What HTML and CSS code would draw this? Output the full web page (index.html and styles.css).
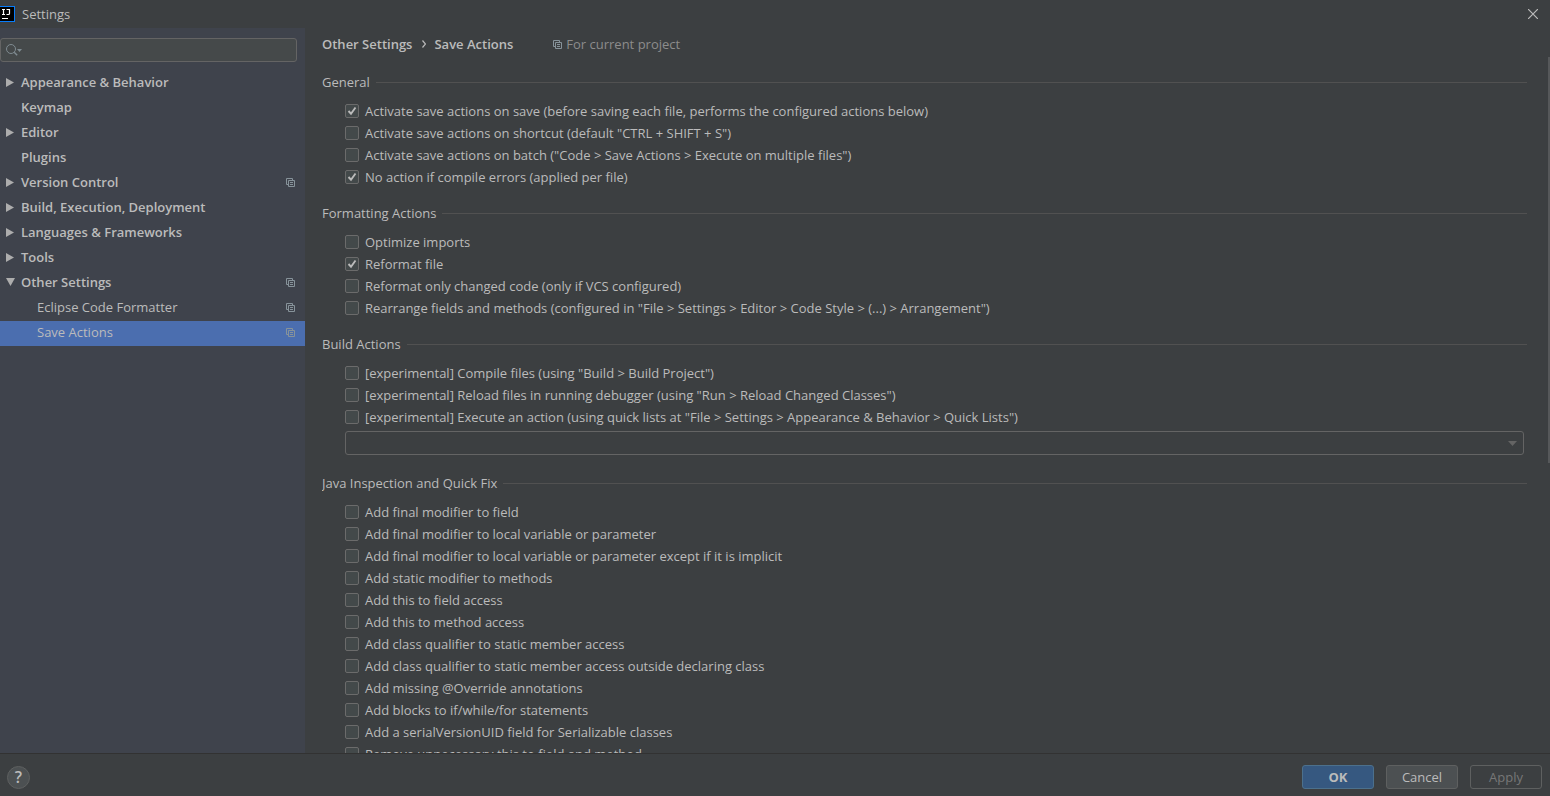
FILE: index.html
```html
<!DOCTYPE html>
<html lang="en">
<head>
<meta charset="utf-8">
<title>Settings</title>
<link rel="stylesheet" href="styles.css">
</head>
<body>
<svg class="defs" aria-hidden="true">
  <symbol id="copy" viewBox="0 0 9 9"><path d="M2.500 6.500h-2v-6h6v2M2.500 2.500h6v6h-6zM4 4.500h3M4 6.500h3" fill="none" stroke="currentColor"/></symbol>
  <symbol id="right" viewBox="0 0 9 9"><path d="M0 0l8 4.500L0 9z" fill="currentColor"/></symbol>
  <symbol id="down" viewBox="0 0 9 9"><path d="M0 0h9L4.500 8z" fill="currentColor"/></symbol>
</svg>
<div class="window">
  <header class="titlebar">
    <svg class="logo" viewBox="0 0 15 16"><path d="M-1 0h16v16H-1z" fill="#087cfa"/><path d="M0 1h14v14H0z" fill="#000"/><path d="M2 3.500h3M3.500 3.500v5M2 8.500h3M6.500 3.500h3v4q0 1-1 1h-2M2 12.500h6" fill="none" stroke="#fff" stroke-width="1.200"/></svg>
    <h1 class="title">Settings</h1>
    <button class="close" aria-label="Close"><svg viewBox="0 0 10 10"><path d="M0 0l10 10M10 0L0 10" fill="none" stroke="currentColor" stroke-width="1.200"/></svg></button>
  </header>
  <div class="body">
    <aside class="sidebar">
      <label class="search">
        <svg viewBox="0 0 16 12"><circle cx="5" cy="5" r="4.500" fill="none" stroke="currentColor"/><path d="M8.200 8.200l3 3" stroke="currentColor" stroke-width="1.400"/><path d="M11 5h5l-2.500 3z" fill="currentColor"/></svg>
        <input type="text" aria-label="Search settings">
      </label>
      <nav class="tree">
        <a class="node" href="#"><svg class="arrow"><use href="#right"/></svg><span>Appearance &amp; Behavior</span></a>
        <a class="node" href="#"><i class="arrow"></i><span>Keymap</span></a>
        <a class="node" href="#"><svg class="arrow"><use href="#right"/></svg><span>Editor</span></a>
        <a class="node" href="#"><i class="arrow"></i><span>Plugins</span></a>
        <a class="node" href="#"><svg class="arrow"><use href="#right"/></svg><span>Version Control</span><svg class="copy"><use href="#copy"/></svg></a>
        <a class="node" href="#"><svg class="arrow"><use href="#right"/></svg><span>Build, Execution, Deployment</span></a>
        <a class="node" href="#"><svg class="arrow"><use href="#right"/></svg><span>Languages &amp; Frameworks</span></a>
        <a class="node" href="#"><svg class="arrow"><use href="#right"/></svg><span>Tools</span></a>
        <a class="node" href="#"><svg class="arrow"><use href="#down"/></svg><span>Other Settings</span><svg class="copy"><use href="#copy"/></svg></a>
        <a class="node leaf" href="#"><span>Eclipse Code Formatter</span><svg class="copy"><use href="#copy"/></svg></a>
        <a class="node leaf selected" href="#"><span>Save Actions</span><svg class="copy"><use href="#copy"/></svg></a>
      </nav>
    </aside>
    <main class="content">
      <div class="crumbs"><b>Other Settings</b><svg class="chevron" viewBox="0 0 4 8"><path d="M.5 .5L3.500 4L.5 7.500" fill="none" stroke="currentColor" stroke-width="1.200"/></svg><b>Save Actions</b><span class="scope"><svg class="copy"><use href="#copy"/></svg>For current project</span></div>
      <div class="scroll">
        <section class="group">
          <h2>General</h2>
          <label class="check"><input type="checkbox" checked>Activate save actions on save (before saving each file, performs the configured actions below)</label>
          <label class="check"><input type="checkbox">Activate save actions on shortcut (default "CTRL + SHIFT + S")</label>
          <label class="check"><input type="checkbox">Activate save actions on batch ("Code &gt; Save Actions &gt; Execute on multiple files")</label>
          <label class="check"><input type="checkbox" checked>No action if compile errors (applied per file)</label>
        </section>
        <section class="group">
          <h2>Formatting Actions</h2>
          <label class="check"><input type="checkbox">Optimize imports</label>
          <label class="check"><input type="checkbox" checked>Reformat file</label>
          <label class="check"><input type="checkbox">Reformat only changed code (only if VCS configured)</label>
          <label class="check"><input type="checkbox">Rearrange fields and methods (configured in "File &gt; Settings &gt; Editor &gt; Code Style &gt; (...) &gt; Arrangement")</label>
        </section>
        <section class="group">
          <h2>Build Actions</h2>
          <label class="check"><input type="checkbox">[experimental] Compile files (using "Build &gt; Build Project")</label>
          <label class="check"><input type="checkbox">[experimental] Reload files in running debugger (using "Run &gt; Reload Changed Classes")</label>
          <label class="check"><input type="checkbox">[experimental] Execute an action (using quick lists at "File &gt; Settings &gt; Appearance &amp; Behavior &gt; Quick Lists")</label>
          <div class="combo"><select aria-label="Quick list"><option></option></select><svg viewBox="0 0 9 5"><path d="M0 0h9L4.500 5z" fill="currentColor"/></svg></div>
        </section>
        <section class="group">
          <h2>Java Inspection and Quick Fix</h2>
          <label class="check"><input type="checkbox">Add final modifier to field</label>
          <label class="check"><input type="checkbox">Add final modifier to local variable or parameter</label>
          <label class="check"><input type="checkbox">Add final modifier to local variable or parameter except if it is implicit</label>
          <label class="check"><input type="checkbox">Add static modifier to methods</label>
          <label class="check"><input type="checkbox">Add this to field access</label>
          <label class="check"><input type="checkbox">Add this to method access</label>
          <label class="check"><input type="checkbox">Add class qualifier to static member access</label>
          <label class="check"><input type="checkbox">Add class qualifier to static member access outside declaring class</label>
          <label class="check"><input type="checkbox">Add missing @Override annotations</label>
          <label class="check"><input type="checkbox">Add blocks to if/while/for statements</label>
          <label class="check"><input type="checkbox">Add a serialVersionUID field for Serializable classes</label>
          <label class="check"><input type="checkbox">Remove unnecessary this to field and method</label>
        </section>
      </div>
      <div class="thumb"></div>
    </main>
  </div>
  <footer class="footer">
    <button class="help" aria-label="Help">?</button>
    <button class="btn primary">OK</button>
    <button class="btn">Cancel</button>
    <button class="btn" disabled>Apply</button>
  </footer>
</div>
</body>
</html>
```

FILE: styles.css
```css
* { box-sizing: border-box; }
body {
  margin: 0;
  background: #3c3f41;
  color: #bbb;
  font: 13px/20px "Open Sans", "Noto Sans", sans-serif;
}
button, input, select { font: inherit; color: inherit; }
b { font-weight: 600; }
.defs { position: absolute; width: 0; height: 0; }
.window { display: flex; flex-direction: column; height: 100vh; overflow: hidden; }

.titlebar { display: flex; align-items: center; height: 28px; flex: none; padding-right: 12px; }
.logo { width: 15px; height: 16px; margin-right: 7px; }
.title { margin: 0; font-size: 13px; font-weight: 400; }
.close { margin-left: auto; padding: 0; border: 0; background: none; display: flex; }
.close svg { width: 10px; height: 10px; }

.body { display: flex; flex: 1; min-height: 0; }
.sidebar { width: 305px; flex: none; padding-top: 10px; background: #3f434c; }
.search {
  display: flex; align-items: center; height: 24px; margin-right: 8px; padding: 0 5px;
  border: 1px solid #646464; border-radius: 3px; background: #45494a; color: #7f8b91;
}
.search svg { width: 16px; height: 12px; flex: none; }
.search input { flex: 1; min-width: 0; border: 0; background: none; outline: 0; color: #bbb; }
.tree { margin-top: 9px; }
.node {
  display: flex; align-items: center; height: 25px; padding: 0 10px 2px 6px;
  color: #bbb; font-weight: 600; line-height: 19px; text-decoration: none;
}
.arrow { width: 9px; height: 9px; margin-right: 6px; color: #adadad; }
.leaf { padding-left: 37px; font-weight: 400; }
.selected { background: #4b6eaf; }
.copy { width: 9px; height: 9px; color: #87939a; flex: none; }
.node .copy { margin-left: auto; }

.content { position: relative; display: flex; flex-direction: column; flex: 1; min-width: 0; padding-left: 17px; }
.crumbs { display: flex; align-items: center; height: 34px; flex: none; padding-bottom: 2px; }
.chevron { width: 4px; height: 8px; margin: 0 8px 0 10px; }
.scope { display: flex; align-items: center; gap: 4px; margin-left: 40px; color: #8c8c8c; }
.scroll { flex: 1; min-height: 0; overflow: hidden; padding: 10px 23px 0 0; }
.thumb { position: absolute; right: 0; top: 29px; width: 2px; height: 56%; background: #56585a; }
.group { margin-bottom: 15px; }
.group h2 {
  display: flex; align-items: center; gap: 6px; height: 21px; margin: 0 0 7px;
  font-size: 13px; font-weight: 400; line-height: 19px;
}
.group h2::after { content: ""; flex: 1; height: 1px; background: #515151; }
.check { display: flex; align-items: center; gap: 6px; height: 22px; padding-left: 23px; }
.check input {
  appearance: none; width: 14px; height: 14px; margin: 0;
  border: 1px solid #6b6b6b; border-radius: 2px; background: #43494a;
}
.check input:checked {
  background-image: url("data:image/svg+xml,%3Csvg xmlns='http://www.w3.org/2000/svg' viewBox='0 0 12 12'%3E%3Cpath d='M2.500 6L5 8.700L9.500 2.500' fill='none' stroke='%23bbb' stroke-width='1.900'/%3E%3C/svg%3E");
}
.combo { position: relative; margin: 3px 3px 18px 23px; }
.combo select {
  display: block; appearance: none; width: 100%; height: 24px;
  border: 1px solid #646464; border-radius: 3px; background: #3c3f41;
}
.combo svg { position: absolute; right: 7px; top: 10px; width: 9px; height: 5px; color: #646464; pointer-events: none; }

.footer {
  display: flex; align-items: center; gap: 12px; flex: none; height: 43px; padding: 4px 8px 0 7px;
  border-top: 1px solid #323232;
}
.help {
  width: 23px; height: 23px; margin-right: auto; padding: 0; border: 1px solid #5e6060; border-radius: 50%;
  background: #4c5052; font-size: 16px; font-weight: 600; line-height: 20px;
}
.btn { width: 72px; height: 24px; padding: 0; border: 1px solid #5e6060; border-radius: 3px; background: #4c5052; }
.primary { border-color: #4c708c; background: #365880; font-weight: 700; }
.btn:disabled { background: none; color: #777; }
```
